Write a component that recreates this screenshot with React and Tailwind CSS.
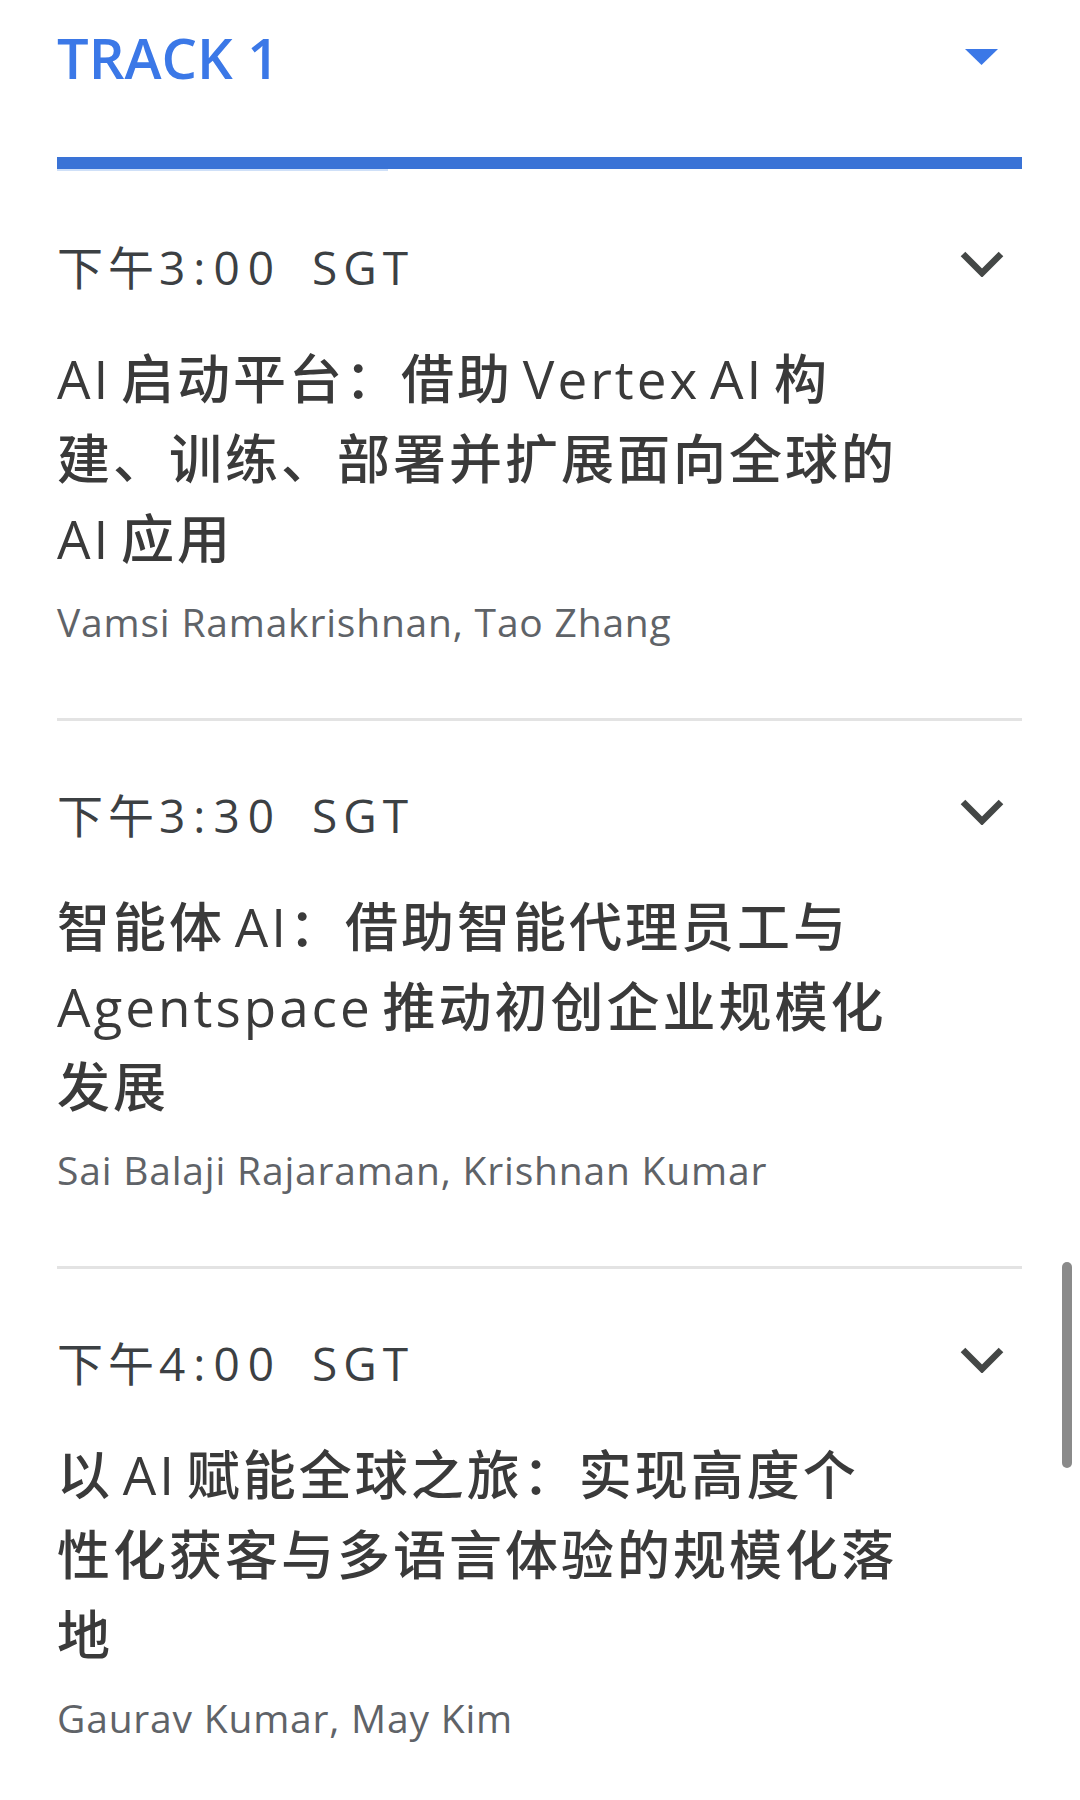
import React from "react";

const sessions = [
  {
    time: "3:00",
    title: ["AI 启动平台：借助 Vertex AI 构", "建、训练、部署并扩展面向全球的", "AI 应用"],
    speakers: "Vamsi Ramakrishnan, Tao Zhang",
  },
  {
    time: "3:30",
    title: ["智能体 AI：借助智能代理员工与", "Agentspace 推动初创企业规模化", "发展"],
    speakers: "Sai Balaji Rajaraman, Krishnan Kumar",
  },
  {
    time: "4:00",
    title: ["以 AI 赋能全球之旅：实现高度个", "性化获客与多语言体验的规模化落", "地"],
    speakers: "Gaurav Kumar, May Kim",
  },
];

function Chevron() {
  return (
    <svg width="44" height="26" viewBox="0 0 44 26" className="shrink-0">
      <path d="M3 3 L22 22 L41 3" fill="none" stroke="#444746" strokeWidth="6.5" strokeLinejoin="miter" />
    </svg>
  );
}

function Session({ s, first }) {
  return (
    <div className={first ? "pt-[68px] pb-[72px]" : "pt-[66px] pb-[72px]"}>
      <div className="flex items-center justify-between">
        <div className="text-[46px] leading-[56px] tracking-[5px] text-[#3c4043] flex">
          <span>下午</span>
          <span className="tracking-[8px]">{s.time}</span>
          <span className="ml-[30px] tracking-[6px]">SGT</span>
        </div>
        <div className="mr-[18px] -mt-[6px]">
          <Chevron />
        </div>
      </div>
      <div className="mt-[44px] text-[53px] leading-[80px] tracking-[3px] [word-spacing:-7px] text-[#3a3a3a] font-medium">
        {s.title.map((line, i) => (
          <div key={i}>{line}</div>
        ))}
      </div>
      <div className="mt-[19px] text-[39px] leading-[48px] tracking-[0.8px] text-[#5f6368]">{s.speakers}</div>
    </div>
  );
}

export default function App() {
  return (
    <div
      className="relative w-[1080px] h-[1800px] bg-white overflow-hidden pl-[57px] pr-[58px] pt-[25px]"
      style={{ fontFamily: '"Open Sans", "Noto Sans CJK SC", sans-serif' }}
    >
      <div className="flex items-center justify-between h-[64px]">
        <div className="text-[56px] leading-[64px] font-semibold text-[#3b78e7]">TRACK 1</div>
        <svg width="33" height="16" viewBox="0 0 33 16" className="mr-[24px]">
          <polygon points="0,0 33,0 16.5,16" fill="#3b78e7" />
        </svg>
      </div>
      <div className="mt-[68px]">
        <div className="h-[12px] bg-[#3a73d6]" />
        <div className="h-[2px] w-[331px] bg-[#cfe0f8]" />
      </div>
      {sessions.map((s, i) => (
        <div key={i}>
          {i > 0 && <div className="h-[3px] bg-[#e3e3e3]" />}
          <Session s={s} first={i === 0} />
        </div>
      ))}
      <div className="absolute left-[1062px] top-[1262px] w-[10px] h-[206px] rounded-full bg-[#8a8a8a]" />
    </div>
  );
}
